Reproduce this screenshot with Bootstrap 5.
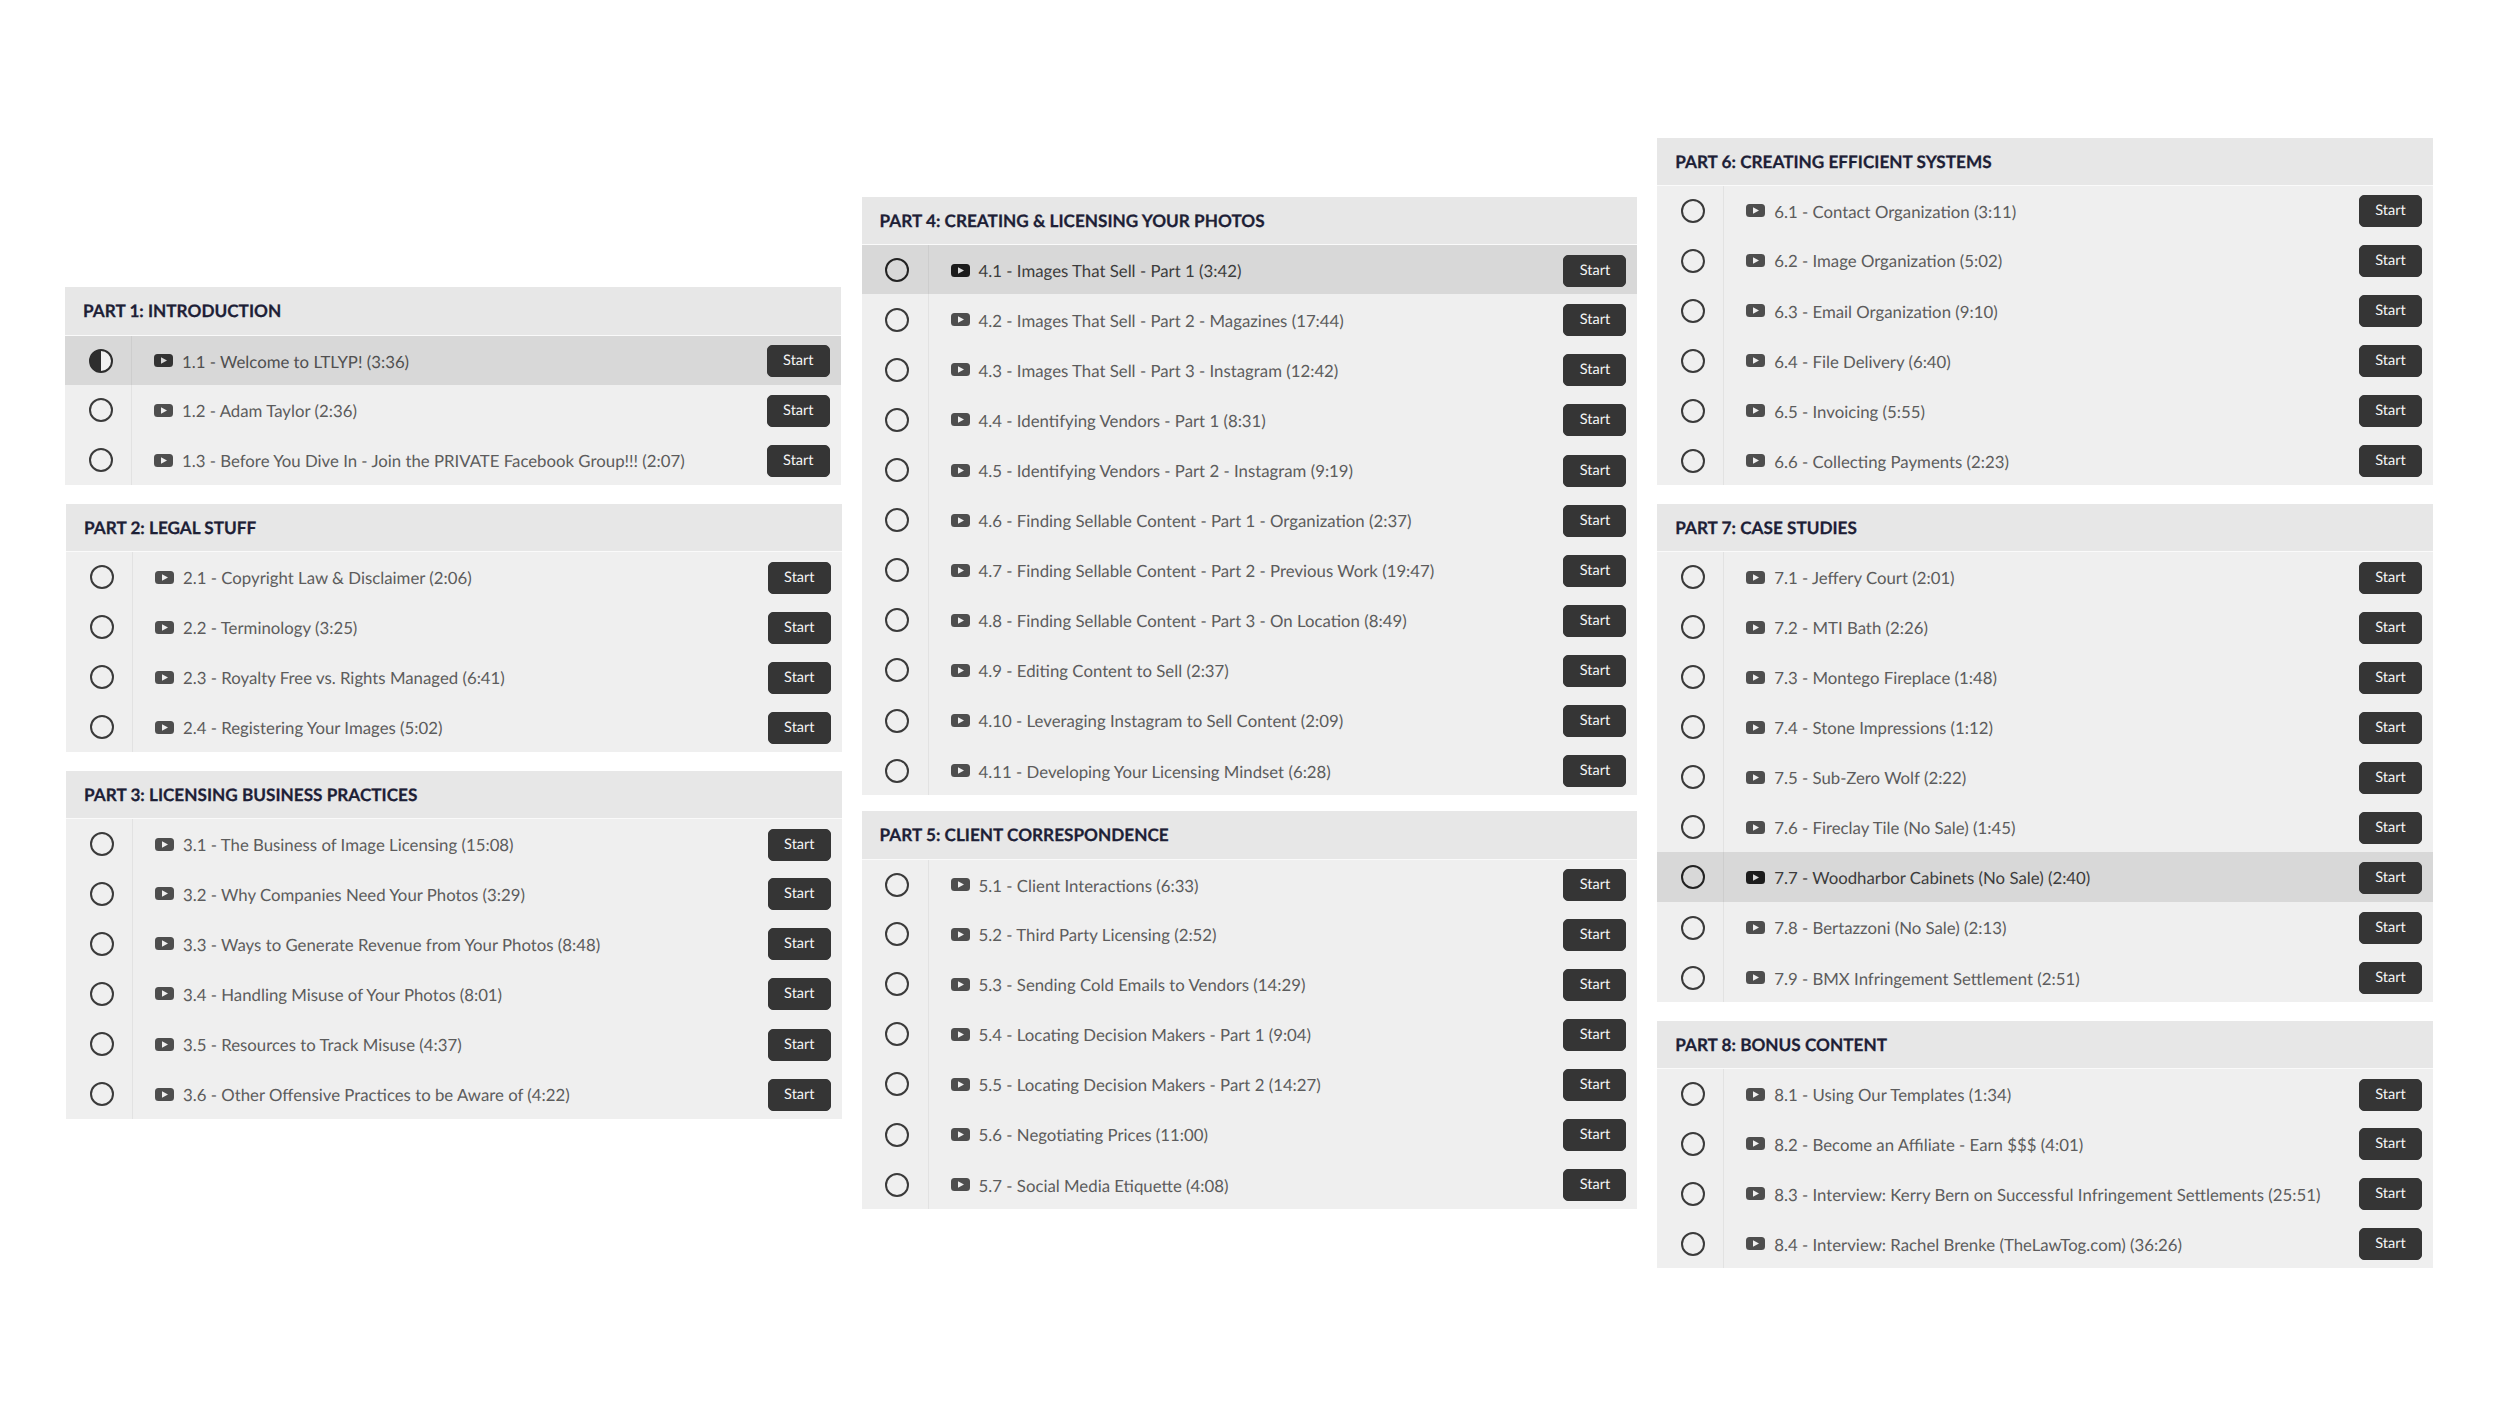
<!DOCTYPE html>
<html lang="en">

<head>
    <meta charset="UTF-8">
    <meta name="viewport" content="width=device-width, initial-scale=1.0">
    <link href="https://cdn.jsdelivr.net/npm/bootstrap@5.3.1/dist/css/bootstrap.min.css" rel="stylesheet">
    <title>Course Outline</title>

    <style>
        body {
            font-family: Lato, "Liberation Sans", sans-serif;
            background: #fff;
            text-rendering: geometricPrecision;
        }

        .outline-page {
            min-height: 1406px;
            padding: 0 67px 0 66px;
        }

        .outline-grid {
            --bs-gutter-x: 19.8px;
        }

        .outline-part {
            margin-bottom: 18.5px;
        }

        .outline-part:last-child {
            margin-bottom: 0;
        }

        .stack-left .outline-part {
            margin-bottom: 19px;
        }

        .stack-left .outline-part:last-child {
            margin-bottom: 0;
        }

        .stack-mid .outline-part {
            margin-bottom: 16px;
        }

        .stack-mid .outline-part:last-child {
            margin-bottom: 0;
        }

        .part-nudge {
            margin-left: -1px;
            margin-right: 1px;
        }

        .part-title {
            background: #e7e7e7;
            color: #1d2036;
            font-size: 17.2px;
            font-weight: 700;
            -webkit-text-stroke: 0.25px #1d2036;
            height: 47.4px;
            line-height: 47.4px;
            padding: 0 18px;
            margin: 0;
        }

        .lesson {
            background: #efefef;
            color: #5c5c5c;
            height: 50.1px;
            padding: 0;
            border: 0;
            border-top: 1.5px solid #fafafa;
            border-radius: 0 !important;
            font-size: 16.8px;
        }

        .lesson.is-current {
            background: #d8d8d8;
            color: #505050;
        }

        .lesson.is-dark {
            color: #3c3c3c;
        }

        .lesson-name {
            padding-top: 2px;
        }

        .lesson-check {
            width: 67px;
            height: 100%;
            padding-left: 5px;
            border-right: 1px solid #e2e2e2;
            color: #3a3a3a;
        }

        .lesson-check svg {
            margin-top: 1px;
        }

        .is-current .lesson-check {
            border-right-color: #cdcdcd;
            color: #2e2e2e;
        }

        .is-dark .lesson-check {
            color: #222;
        }

        .lesson-play {
            width: 19px;
            height: 13px;
            margin-top: 1px;
            margin-left: 22px;
            margin-right: 9px;
            color: #4e4e4e;
        }

        .is-current .lesson-play {
            color: #333;
        }

        .is-dark .lesson-play {
            color: #1c1c1c;
        }

        .start-btn {
            --bs-btn-bg: #353535;
            --bs-btn-border-color: #353535;
            --bs-btn-hover-bg: #222;
            --bs-btn-hover-border-color: #222;
            --bs-btn-color: #f4f4f4;
            --bs-btn-hover-color: #fff;
            --bs-btn-font-size: 14.5px;
            --bs-btn-border-radius: 5px;
            --bs-btn-padding-y: 0;
            --bs-btn-padding-x: 0;
            width: 63px;
            height: 32px;
            line-height: 30px;
            margin-top: 2px;
            margin-right: 11px;
        }
    </style>
</head>

<body>
    <svg width="0" height="0" class="position-absolute">
        <symbol id="i-open" viewBox="0 0 24 24"><circle cx="12" cy="12" r="11" fill="none" stroke="currentColor" stroke-width="2"/></symbol>
        <symbol id="i-half" viewBox="0 0 24 24"><circle cx="12" cy="12" r="11" fill="#f2f2f2" stroke="currentColor" stroke-width="2"/><path d="M12 1a11 11 0 0 0 0 22z" fill="currentColor"/></symbol>
        <symbol id="i-play" viewBox="0 0 19 13"><path fill="currentColor" fill-rule="evenodd" d="M3.5 0h12a3.5 3.5 0 0 1 3.5 3.5v6a3.5 3.5 0 0 1-3.5 3.5h-12A3.5 3.5 0 0 1 0 9.500v-6A3.500 3.500 0 0 1 3.500 0zM7 3.300v6.400l6-3.200z"/></symbol>
    </svg>

    <div class="outline-page d-flex align-items-center">
        <div class="row outline-grid flex-grow-1 align-items-center">

            <div class="col-4 stack-left">
                <div class="outline-part part-nudge">
                    <h2 class="part-title">PART 1: INTRODUCTION</h2>
                    <ul class="list-group">
                        <li class="list-group-item lesson is-current d-flex align-items-center"><span class="lesson-check d-flex align-items-center justify-content-center"><svg width="24" height="24"><use href="#i-half"/></svg></span><svg class="lesson-play"><use href="#i-play"/></svg><span class="lesson-name flex-grow-1">1.1 - Welcome to LTLYP! (3:36)</span><a href="#" class="btn start-btn">Start</a></li>
                        <li class="list-group-item lesson d-flex align-items-center"><span class="lesson-check d-flex align-items-center justify-content-center"><svg width="24" height="24"><use href="#i-open"/></svg></span><svg class="lesson-play"><use href="#i-play"/></svg><span class="lesson-name flex-grow-1">1.2 - Adam Taylor (2:36)</span><a href="#" class="btn start-btn">Start</a></li>
                        <li class="list-group-item lesson d-flex align-items-center"><span class="lesson-check d-flex align-items-center justify-content-center"><svg width="24" height="24"><use href="#i-open"/></svg></span><svg class="lesson-play"><use href="#i-play"/></svg><span class="lesson-name flex-grow-1">1.3 - Before You Dive In - Join the PRIVATE Facebook Group!!! (2:07)</span><a href="#" class="btn start-btn">Start</a></li>
                    </ul>
                </div>
                <div class="outline-part">
                    <h2 class="part-title">PART 2: LEGAL STUFF</h2>
                    <ul class="list-group">
                        <li class="list-group-item lesson d-flex align-items-center"><span class="lesson-check d-flex align-items-center justify-content-center"><svg width="24" height="24"><use href="#i-open"/></svg></span><svg class="lesson-play"><use href="#i-play"/></svg><span class="lesson-name flex-grow-1">2.1 - Copyright Law &amp; Disclaimer (2:06)</span><a href="#" class="btn start-btn">Start</a></li>
                        <li class="list-group-item lesson d-flex align-items-center"><span class="lesson-check d-flex align-items-center justify-content-center"><svg width="24" height="24"><use href="#i-open"/></svg></span><svg class="lesson-play"><use href="#i-play"/></svg><span class="lesson-name flex-grow-1">2.2 - Terminology (3:25)</span><a href="#" class="btn start-btn">Start</a></li>
                        <li class="list-group-item lesson d-flex align-items-center"><span class="lesson-check d-flex align-items-center justify-content-center"><svg width="24" height="24"><use href="#i-open"/></svg></span><svg class="lesson-play"><use href="#i-play"/></svg><span class="lesson-name flex-grow-1">2.3 - Royalty Free vs. Rights Managed (6:41)</span><a href="#" class="btn start-btn">Start</a></li>
                        <li class="list-group-item lesson d-flex align-items-center"><span class="lesson-check d-flex align-items-center justify-content-center"><svg width="24" height="24"><use href="#i-open"/></svg></span><svg class="lesson-play"><use href="#i-play"/></svg><span class="lesson-name flex-grow-1">2.4 - Registering Your Images (5:02)</span><a href="#" class="btn start-btn">Start</a></li>
                    </ul>
                </div>
                <div class="outline-part">
                    <h2 class="part-title">PART 3: LICENSING BUSINESS PRACTICES</h2>
                    <ul class="list-group">
                        <li class="list-group-item lesson d-flex align-items-center"><span class="lesson-check d-flex align-items-center justify-content-center"><svg width="24" height="24"><use href="#i-open"/></svg></span><svg class="lesson-play"><use href="#i-play"/></svg><span class="lesson-name flex-grow-1">3.1 - The Business of Image Licensing (15:08)</span><a href="#" class="btn start-btn">Start</a></li>
                        <li class="list-group-item lesson d-flex align-items-center"><span class="lesson-check d-flex align-items-center justify-content-center"><svg width="24" height="24"><use href="#i-open"/></svg></span><svg class="lesson-play"><use href="#i-play"/></svg><span class="lesson-name flex-grow-1">3.2 - Why Companies Need Your Photos (3:29)</span><a href="#" class="btn start-btn">Start</a></li>
                        <li class="list-group-item lesson d-flex align-items-center"><span class="lesson-check d-flex align-items-center justify-content-center"><svg width="24" height="24"><use href="#i-open"/></svg></span><svg class="lesson-play"><use href="#i-play"/></svg><span class="lesson-name flex-grow-1">3.3 - Ways to Generate Revenue from Your Photos (8:48)</span><a href="#" class="btn start-btn">Start</a></li>
                        <li class="list-group-item lesson d-flex align-items-center"><span class="lesson-check d-flex align-items-center justify-content-center"><svg width="24" height="24"><use href="#i-open"/></svg></span><svg class="lesson-play"><use href="#i-play"/></svg><span class="lesson-name flex-grow-1">3.4 - Handling Misuse of Your Photos (8:01)</span><a href="#" class="btn start-btn">Start</a></li>
                        <li class="list-group-item lesson d-flex align-items-center"><span class="lesson-check d-flex align-items-center justify-content-center"><svg width="24" height="24"><use href="#i-open"/></svg></span><svg class="lesson-play"><use href="#i-play"/></svg><span class="lesson-name flex-grow-1">3.5 - Resources to Track Misuse (4:37)</span><a href="#" class="btn start-btn">Start</a></li>
                        <li class="list-group-item lesson d-flex align-items-center"><span class="lesson-check d-flex align-items-center justify-content-center"><svg width="24" height="24"><use href="#i-open"/></svg></span><svg class="lesson-play"><use href="#i-play"/></svg><span class="lesson-name flex-grow-1">3.6 - Other Offensive Practices to be Aware of (4:22)</span><a href="#" class="btn start-btn">Start</a></li>
                    </ul>
                </div>
            </div>

            <div class="col-4 stack-mid">
                <div class="outline-part">
                    <h2 class="part-title">PART 4: CREATING &amp; LICENSING YOUR PHOTOS</h2>
                    <ul class="list-group">
                        <li class="list-group-item lesson is-current is-dark d-flex align-items-center"><span class="lesson-check d-flex align-items-center justify-content-center"><svg width="24" height="24"><use href="#i-open"/></svg></span><svg class="lesson-play"><use href="#i-play"/></svg><span class="lesson-name flex-grow-1">4.1 - Images That Sell - Part 1 (3:42)</span><a href="#" class="btn start-btn">Start</a></li>
                        <li class="list-group-item lesson d-flex align-items-center"><span class="lesson-check d-flex align-items-center justify-content-center"><svg width="24" height="24"><use href="#i-open"/></svg></span><svg class="lesson-play"><use href="#i-play"/></svg><span class="lesson-name flex-grow-1">4.2 - Images That Sell - Part 2 - Magazines (17:44)</span><a href="#" class="btn start-btn">Start</a></li>
                        <li class="list-group-item lesson d-flex align-items-center"><span class="lesson-check d-flex align-items-center justify-content-center"><svg width="24" height="24"><use href="#i-open"/></svg></span><svg class="lesson-play"><use href="#i-play"/></svg><span class="lesson-name flex-grow-1">4.3 - Images That Sell - Part 3 - Instagram (12:42)</span><a href="#" class="btn start-btn">Start</a></li>
                        <li class="list-group-item lesson d-flex align-items-center"><span class="lesson-check d-flex align-items-center justify-content-center"><svg width="24" height="24"><use href="#i-open"/></svg></span><svg class="lesson-play"><use href="#i-play"/></svg><span class="lesson-name flex-grow-1">4.4 - Identifying Vendors - Part 1 (8:31)</span><a href="#" class="btn start-btn">Start</a></li>
                        <li class="list-group-item lesson d-flex align-items-center"><span class="lesson-check d-flex align-items-center justify-content-center"><svg width="24" height="24"><use href="#i-open"/></svg></span><svg class="lesson-play"><use href="#i-play"/></svg><span class="lesson-name flex-grow-1">4.5 - Identifying Vendors - Part 2 - Instagram (9:19)</span><a href="#" class="btn start-btn">Start</a></li>
                        <li class="list-group-item lesson d-flex align-items-center"><span class="lesson-check d-flex align-items-center justify-content-center"><svg width="24" height="24"><use href="#i-open"/></svg></span><svg class="lesson-play"><use href="#i-play"/></svg><span class="lesson-name flex-grow-1">4.6 - Finding Sellable Content - Part 1 - Organization (2:37)</span><a href="#" class="btn start-btn">Start</a></li>
                        <li class="list-group-item lesson d-flex align-items-center"><span class="lesson-check d-flex align-items-center justify-content-center"><svg width="24" height="24"><use href="#i-open"/></svg></span><svg class="lesson-play"><use href="#i-play"/></svg><span class="lesson-name flex-grow-1">4.7 - Finding Sellable Content - Part 2 - Previous Work (19:47)</span><a href="#" class="btn start-btn">Start</a></li>
                        <li class="list-group-item lesson d-flex align-items-center"><span class="lesson-check d-flex align-items-center justify-content-center"><svg width="24" height="24"><use href="#i-open"/></svg></span><svg class="lesson-play"><use href="#i-play"/></svg><span class="lesson-name flex-grow-1">4.8 - Finding Sellable Content - Part 3 - On Location (8:49)</span><a href="#" class="btn start-btn">Start</a></li>
                        <li class="list-group-item lesson d-flex align-items-center"><span class="lesson-check d-flex align-items-center justify-content-center"><svg width="24" height="24"><use href="#i-open"/></svg></span><svg class="lesson-play"><use href="#i-play"/></svg><span class="lesson-name flex-grow-1">4.9 - Editing Content to Sell (2:37)</span><a href="#" class="btn start-btn">Start</a></li>
                        <li class="list-group-item lesson d-flex align-items-center"><span class="lesson-check d-flex align-items-center justify-content-center"><svg width="24" height="24"><use href="#i-open"/></svg></span><svg class="lesson-play"><use href="#i-play"/></svg><span class="lesson-name flex-grow-1">4.10 - Leveraging Instagram to Sell Content (2:09)</span><a href="#" class="btn start-btn">Start</a></li>
                        <li class="list-group-item lesson d-flex align-items-center"><span class="lesson-check d-flex align-items-center justify-content-center"><svg width="24" height="24"><use href="#i-open"/></svg></span><svg class="lesson-play"><use href="#i-play"/></svg><span class="lesson-name flex-grow-1">4.11 - Developing Your Licensing Mindset (6:28)</span><a href="#" class="btn start-btn">Start</a></li>
                    </ul>
                </div>
                <div class="outline-part">
                    <h2 class="part-title">PART 5: CLIENT CORRESPONDENCE</h2>
                    <ul class="list-group">
                        <li class="list-group-item lesson d-flex align-items-center"><span class="lesson-check d-flex align-items-center justify-content-center"><svg width="24" height="24"><use href="#i-open"/></svg></span><svg class="lesson-play"><use href="#i-play"/></svg><span class="lesson-name flex-grow-1">5.1 - Client Interactions (6:33)</span><a href="#" class="btn start-btn">Start</a></li>
                        <li class="list-group-item lesson d-flex align-items-center"><span class="lesson-check d-flex align-items-center justify-content-center"><svg width="24" height="24"><use href="#i-open"/></svg></span><svg class="lesson-play"><use href="#i-play"/></svg><span class="lesson-name flex-grow-1">5.2 - Third Party Licensing (2:52)</span><a href="#" class="btn start-btn">Start</a></li>
                        <li class="list-group-item lesson d-flex align-items-center"><span class="lesson-check d-flex align-items-center justify-content-center"><svg width="24" height="24"><use href="#i-open"/></svg></span><svg class="lesson-play"><use href="#i-play"/></svg><span class="lesson-name flex-grow-1">5.3 - Sending Cold Emails to Vendors (14:29)</span><a href="#" class="btn start-btn">Start</a></li>
                        <li class="list-group-item lesson d-flex align-items-center"><span class="lesson-check d-flex align-items-center justify-content-center"><svg width="24" height="24"><use href="#i-open"/></svg></span><svg class="lesson-play"><use href="#i-play"/></svg><span class="lesson-name flex-grow-1">5.4 - Locating Decision Makers - Part 1 (9:04)</span><a href="#" class="btn start-btn">Start</a></li>
                        <li class="list-group-item lesson d-flex align-items-center"><span class="lesson-check d-flex align-items-center justify-content-center"><svg width="24" height="24"><use href="#i-open"/></svg></span><svg class="lesson-play"><use href="#i-play"/></svg><span class="lesson-name flex-grow-1">5.5 - Locating Decision Makers - Part 2 (14:27)</span><a href="#" class="btn start-btn">Start</a></li>
                        <li class="list-group-item lesson d-flex align-items-center"><span class="lesson-check d-flex align-items-center justify-content-center"><svg width="24" height="24"><use href="#i-open"/></svg></span><svg class="lesson-play"><use href="#i-play"/></svg><span class="lesson-name flex-grow-1">5.6 - Negotiating Prices (11:00)</span><a href="#" class="btn start-btn">Start</a></li>
                        <li class="list-group-item lesson d-flex align-items-center"><span class="lesson-check d-flex align-items-center justify-content-center"><svg width="24" height="24"><use href="#i-open"/></svg></span><svg class="lesson-play"><use href="#i-play"/></svg><span class="lesson-name flex-grow-1">5.7 - Social Media Etiquette (4:08)</span><a href="#" class="btn start-btn">Start</a></li>
                    </ul>
                </div>
            </div>

            <div class="col-4">
                <div class="outline-part">
                    <h2 class="part-title">PART 6: CREATING EFFICIENT SYSTEMS</h2>
                    <ul class="list-group">
                        <li class="list-group-item lesson d-flex align-items-center"><span class="lesson-check d-flex align-items-center justify-content-center"><svg width="24" height="24"><use href="#i-open"/></svg></span><svg class="lesson-play"><use href="#i-play"/></svg><span class="lesson-name flex-grow-1">6.1 - Contact Organization (3:11)</span><a href="#" class="btn start-btn">Start</a></li>
                        <li class="list-group-item lesson d-flex align-items-center"><span class="lesson-check d-flex align-items-center justify-content-center"><svg width="24" height="24"><use href="#i-open"/></svg></span><svg class="lesson-play"><use href="#i-play"/></svg><span class="lesson-name flex-grow-1">6.2 - Image Organization (5:02)</span><a href="#" class="btn start-btn">Start</a></li>
                        <li class="list-group-item lesson d-flex align-items-center"><span class="lesson-check d-flex align-items-center justify-content-center"><svg width="24" height="24"><use href="#i-open"/></svg></span><svg class="lesson-play"><use href="#i-play"/></svg><span class="lesson-name flex-grow-1">6.3 - Email Organization (9:10)</span><a href="#" class="btn start-btn">Start</a></li>
                        <li class="list-group-item lesson d-flex align-items-center"><span class="lesson-check d-flex align-items-center justify-content-center"><svg width="24" height="24"><use href="#i-open"/></svg></span><svg class="lesson-play"><use href="#i-play"/></svg><span class="lesson-name flex-grow-1">6.4 - File Delivery (6:40)</span><a href="#" class="btn start-btn">Start</a></li>
                        <li class="list-group-item lesson d-flex align-items-center"><span class="lesson-check d-flex align-items-center justify-content-center"><svg width="24" height="24"><use href="#i-open"/></svg></span><svg class="lesson-play"><use href="#i-play"/></svg><span class="lesson-name flex-grow-1">6.5 - Invoicing (5:55)</span><a href="#" class="btn start-btn">Start</a></li>
                        <li class="list-group-item lesson d-flex align-items-center"><span class="lesson-check d-flex align-items-center justify-content-center"><svg width="24" height="24"><use href="#i-open"/></svg></span><svg class="lesson-play"><use href="#i-play"/></svg><span class="lesson-name flex-grow-1">6.6 - Collecting Payments (2:23)</span><a href="#" class="btn start-btn">Start</a></li>
                    </ul>
                </div>
                <div class="outline-part">
                    <h2 class="part-title">PART 7: CASE STUDIES</h2>
                    <ul class="list-group">
                        <li class="list-group-item lesson d-flex align-items-center"><span class="lesson-check d-flex align-items-center justify-content-center"><svg width="24" height="24"><use href="#i-open"/></svg></span><svg class="lesson-play"><use href="#i-play"/></svg><span class="lesson-name flex-grow-1">7.1 - Jeffery Court (2:01)</span><a href="#" class="btn start-btn">Start</a></li>
                        <li class="list-group-item lesson d-flex align-items-center"><span class="lesson-check d-flex align-items-center justify-content-center"><svg width="24" height="24"><use href="#i-open"/></svg></span><svg class="lesson-play"><use href="#i-play"/></svg><span class="lesson-name flex-grow-1">7.2 - MTI Bath (2:26)</span><a href="#" class="btn start-btn">Start</a></li>
                        <li class="list-group-item lesson d-flex align-items-center"><span class="lesson-check d-flex align-items-center justify-content-center"><svg width="24" height="24"><use href="#i-open"/></svg></span><svg class="lesson-play"><use href="#i-play"/></svg><span class="lesson-name flex-grow-1">7.3 - Montego Fireplace (1:48)</span><a href="#" class="btn start-btn">Start</a></li>
                        <li class="list-group-item lesson d-flex align-items-center"><span class="lesson-check d-flex align-items-center justify-content-center"><svg width="24" height="24"><use href="#i-open"/></svg></span><svg class="lesson-play"><use href="#i-play"/></svg><span class="lesson-name flex-grow-1">7.4 - Stone Impressions (1:12)</span><a href="#" class="btn start-btn">Start</a></li>
                        <li class="list-group-item lesson d-flex align-items-center"><span class="lesson-check d-flex align-items-center justify-content-center"><svg width="24" height="24"><use href="#i-open"/></svg></span><svg class="lesson-play"><use href="#i-play"/></svg><span class="lesson-name flex-grow-1">7.5 - Sub-Zero Wolf (2:22)</span><a href="#" class="btn start-btn">Start</a></li>
                        <li class="list-group-item lesson d-flex align-items-center"><span class="lesson-check d-flex align-items-center justify-content-center"><svg width="24" height="24"><use href="#i-open"/></svg></span><svg class="lesson-play"><use href="#i-play"/></svg><span class="lesson-name flex-grow-1">7.6 - Fireclay Tile (No Sale) (1:45)</span><a href="#" class="btn start-btn">Start</a></li>
                        <li class="list-group-item lesson is-current is-dark d-flex align-items-center"><span class="lesson-check d-flex align-items-center justify-content-center"><svg width="24" height="24"><use href="#i-open"/></svg></span><svg class="lesson-play"><use href="#i-play"/></svg><span class="lesson-name flex-grow-1">7.7 - Woodharbor Cabinets (No Sale) (2:40)</span><a href="#" class="btn start-btn">Start</a></li>
                        <li class="list-group-item lesson d-flex align-items-center"><span class="lesson-check d-flex align-items-center justify-content-center"><svg width="24" height="24"><use href="#i-open"/></svg></span><svg class="lesson-play"><use href="#i-play"/></svg><span class="lesson-name flex-grow-1">7.8 - Bertazzoni (No Sale) (2:13)</span><a href="#" class="btn start-btn">Start</a></li>
                        <li class="list-group-item lesson d-flex align-items-center"><span class="lesson-check d-flex align-items-center justify-content-center"><svg width="24" height="24"><use href="#i-open"/></svg></span><svg class="lesson-play"><use href="#i-play"/></svg><span class="lesson-name flex-grow-1">7.9 - BMX Infringement Settlement (2:51)</span><a href="#" class="btn start-btn">Start</a></li>
                    </ul>
                </div>
                <div class="outline-part">
                    <h2 class="part-title">PART 8: BONUS CONTENT</h2>
                    <ul class="list-group">
                        <li class="list-group-item lesson d-flex align-items-center"><span class="lesson-check d-flex align-items-center justify-content-center"><svg width="24" height="24"><use href="#i-open"/></svg></span><svg class="lesson-play"><use href="#i-play"/></svg><span class="lesson-name flex-grow-1">8.1 - Using Our Templates (1:34)</span><a href="#" class="btn start-btn">Start</a></li>
                        <li class="list-group-item lesson d-flex align-items-center"><span class="lesson-check d-flex align-items-center justify-content-center"><svg width="24" height="24"><use href="#i-open"/></svg></span><svg class="lesson-play"><use href="#i-play"/></svg><span class="lesson-name flex-grow-1">8.2 - Become an Affiliate - Earn $$$ (4:01)</span><a href="#" class="btn start-btn">Start</a></li>
                        <li class="list-group-item lesson d-flex align-items-center"><span class="lesson-check d-flex align-items-center justify-content-center"><svg width="24" height="24"><use href="#i-open"/></svg></span><svg class="lesson-play"><use href="#i-play"/></svg><span class="lesson-name flex-grow-1">8.3 - Interview: Kerry Bern on Successful Infringement Settlements (25:51)</span><a href="#" class="btn start-btn">Start</a></li>
                        <li class="list-group-item lesson d-flex align-items-center"><span class="lesson-check d-flex align-items-center justify-content-center"><svg width="24" height="24"><use href="#i-open"/></svg></span><svg class="lesson-play"><use href="#i-play"/></svg><span class="lesson-name flex-grow-1">8.4 - Interview: Rachel Brenke (TheLawTog.com) (36:26)</span><a href="#" class="btn start-btn">Start</a></li>
                    </ul>
                </div>
            </div>

        </div>
    </div>

    <script src="https://cdn.jsdelivr.net/npm/bootstrap@5.3.1/dist/js/bootstrap.bundle.min.js"></script>
</body>

</html>
